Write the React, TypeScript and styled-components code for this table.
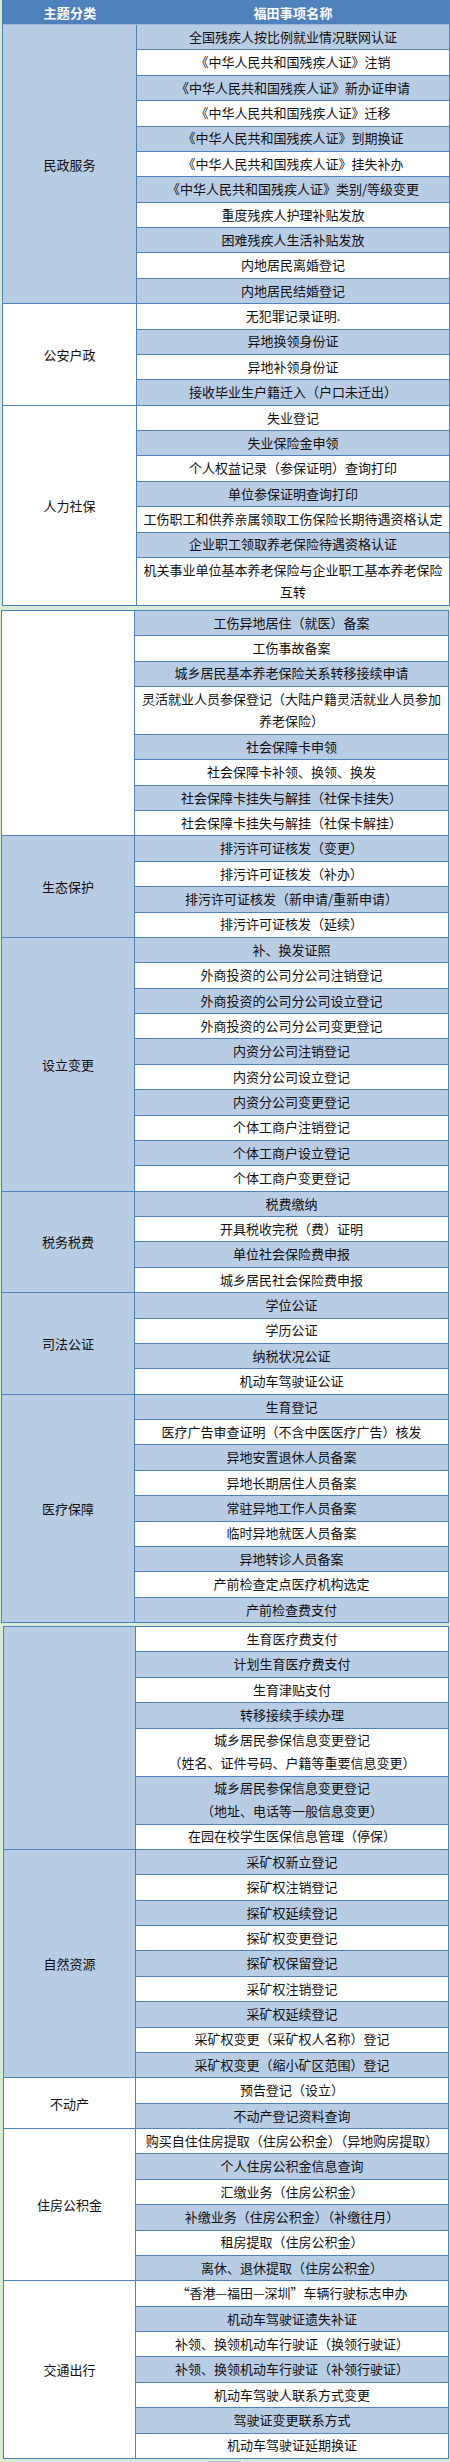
import styled, { createGlobalStyle } from "styled-components";

const GlobalStyle = createGlobalStyle`
    html, body {
        margin: 0;
        padding: 0;
        background: #d7ebd3;
    }
    body {
        font-family: "Noto Sans CJK SC", "Noto Sans", sans-serif;
        font-size: 13px;
        color: #111;
    }
`;

const LINE = "#4f81bd";
const STRIPE = "#b8cce4";

const Page = styled.div`
    width: 450px;
    min-height: 2462px;
    background: #d7ebd3;
    display: flex;
    flex-direction: column;
`;

const Block = styled.div<{ $left: number; $width: number; $top: number }>`
    margin-left: ${(p) => p.$left}px;
    margin-top: ${(p) => p.$top}px;
    width: ${(p) => p.$width}px;
    border: 1px solid ${LINE};
    background: #fff;
    display: flex;
    flex-direction: column;
`;

const HeaderRow = styled.div`
    display: flex;
    height: 23px;
    background: #4f81bd;
    border-bottom: 1px solid #9db5d8;
`;

const HeaderCell = styled.div<{ $w?: number }>`
    ${(p) => (p.$w ? `width: ${p.$w}px;` : "flex: 1;")}
    display: flex;
    align-items: center;
    justify-content: center;
    color: #fff;
    font-weight: 700;
    font-size: 13px;
    letter-spacing: 0.2px;
`;

const Section = styled.div`
    display: flex;
    &:not(:last-child) {
        border-bottom: 1px solid ${LINE};
    }
`;

const Category = styled.div<{ $w: number; $blue: boolean }>`
    width: ${(p) => p.$w}px;
    flex-shrink: 0;
    display: flex;
    align-items: center;
    justify-content: center;
    background: ${(p) => (p.$blue ? STRIPE : "#fff")};
    border-right: 1px solid ${LINE};
`;

const Items = styled.div`
    flex: 1;
    display: flex;
    flex-direction: column;
`;

const Item = styled.div<{ $blue: boolean }>`
    text-align: center;
    line-height: 22.6px;
    padding: 0.9px 2px;
    background: ${(p) => (p.$blue ? STRIPE : "#fff")};
    &:not(:last-child) {
        border-bottom: 1px solid ${LINE};
    }
`;

const Foot = styled.div`
    height: 3px;
    display: flex;
    justify-content: center;
`;

const FootMark = styled.div`
    width: 33px;
    height: 1px;
    margin-top: 2px;
    margin-left: -2px;
    background: #b9c2b8;
`;

type Sec = { name: string; blue: boolean; items: string[] };
type Blk = { left: number; width: number; top: number; cat: number; firstBlue: boolean; header?: boolean; sections: Sec[] };

const blocks: Blk[] = [
    {
        left: 2, width: 446, top: 0, cat: 133, firstBlue: true, header: true,
        sections: [
            {
                name: "民政服务", blue: true, items: [
                    "全国残疾人按比例就业情况联网认证",
                    "《中华人民共和国残疾人证》注销",
                    "《中华人民共和国残疾人证》新办证申请",
                    "《中华人民共和国残疾人证》迁移",
                    "《中华人民共和国残疾人证》到期换证",
                    "《中华人民共和国残疾人证》挂失补办",
                    "《中华人民共和国残疾人证》类别/等级变更",
                    "重度残疾人护理补贴发放",
                    "困难残疾人生活补贴发放",
                    "内地居民离婚登记",
                    "内地居民结婚登记",
                ],
            },
            {
                name: "公安户政", blue: false, items: [
                    "无犯罪记录证明.",
                    "异地换领身份证",
                    "异地补领身份证",
                    "接收毕业生户籍迁入（户口未迁出）",
                ],
            },
            {
                name: "人力社保", blue: false, items: [
                    "失业登记",
                    "失业保险金申领",
                    "个人权益记录（参保证明）查询打印",
                    "单位参保证明查询打印",
                    "工伤职工和供养亲属领取工伤保险长期待遇资格认定",
                    "企业职工领取养老保险待遇资格认证",
                    "机关事业单位基本养老保险与企业职工基本养老保险互转",
                ],
            },
        ],
    },
    {
        left: 1, width: 446, top: 4, cat: 132, firstBlue: true,
        sections: [
            {
                name: "", blue: false, items: [
                    "工伤异地居住（就医）备案",
                    "工伤事故备案",
                    "城乡居民基本养老保险关系转移接续申请",
                    "灵活就业人员参保登记（大陆户籍灵活就业人员参加养老保险）",
                    "社会保障卡申领",
                    "社会保障卡补领、换领、换发",
                    "社会保障卡挂失与解挂（社保卡挂失）",
                    "社会保障卡挂失与解挂（社保卡解挂）",
                ],
            },
            {
                name: "生态保护", blue: true, items: [
                    "排污许可证核发（变更）",
                    "排污许可证核发（补办）",
                    "排污许可证核发（新申请/重新申请）",
                    "排污许可证核发（延续）",
                ],
            },
            {
                name: "设立变更", blue: true, items: [
                    "补、换发证照",
                    "外商投资的公司分公司注销登记",
                    "外商投资的公司分公司设立登记",
                    "外商投资的公司分公司变更登记",
                    "内资分公司注销登记",
                    "内资分公司设立登记",
                    "内资分公司变更登记",
                    "个体工商户注销登记",
                    "个体工商户设立登记",
                    "个体工商户变更登记",
                ],
            },
            {
                name: "税务税费", blue: true, items: [
                    "税费缴纳",
                    "开具税收完税（费）证明",
                    "单位社会保险费申报",
                    "城乡居民社会保险费申报",
                ],
            },
            {
                name: "司法公证", blue: true, items: [
                    "学位公证",
                    "学历公证",
                    "纳税状况公证",
                    "机动车驾驶证公证",
                ],
            },
            {
                name: "医疗保障", blue: true, items: [
                    "生育登记",
                    "医疗广告审查证明（不含中医医疗广告）核发",
                    "异地安置退休人员备案",
                    "异地长期居住人员备案",
                    "常驻异地工作人员备案",
                    "临时异地就医人员备案",
                    "异地转诊人员备案",
                    "产前检查定点医疗机构选定",
                    "产前检查费支付",
                ],
            },
        ],
    },
    {
        left: 3, width: 444, top: 3, cat: 131, firstBlue: false,
        sections: [
            {
                name: "", blue: true, items: [
                    "生育医疗费支付",
                    "计划生育医疗费支付",
                    "生育津贴支付",
                    "转移接续手续办理",
                    "城乡居民参保信息变更登记\n（姓名、证件号码、户籍等重要信息变更）",
                    "城乡居民参保信息变更登记\n（地址、电话等一般信息变更）",
                    "在园在校学生医保信息管理（停保）",
                ],
            },
            {
                name: "自然资源", blue: true, items: [
                    "采矿权新立登记",
                    "探矿权注销登记",
                    "探矿权延续登记",
                    "探矿权变更登记",
                    "探矿权保留登记",
                    "采矿权注销登记",
                    "采矿权延续登记",
                    "采矿权变更（采矿权人名称）登记",
                    "采矿权变更（缩小矿区范围）登记",
                ],
            },
            {
                name: "不动产", blue: false, items: [
                    "预告登记（设立）",
                    "不动产登记资料查询",
                ],
            },
            {
                name: "住房公积金", blue: false, items: [
                    "购买自住住房提取（住房公积金）（异地购房提取）",
                    "个人住房公积金信息查询",
                    "汇缴业务（住房公积金）",
                    "补缴业务（住房公积金）（补缴往月）",
                    "租房提取（住房公积金）",
                    "离休、退休提取（住房公积金）",
                ],
            },
            {
                name: "交通出行", blue: false, items: [
                    "“香港—福田—深圳”车辆行驶标志申办",
                    "机动车驾驶证遗失补证",
                    "补领、换领机动车行驶证（换领行驶证）",
                    "补领、换领机动车行驶证（补领行驶证）",
                    "机动车驾驶人联系方式变更",
                    "驾驶证变更联系方式",
                    "机动车驾驶证延期换证",
                ],
            },
        ],
    },
];

const renderText = (text: string) =>
    text.split("\n").map((line, i) => (
        <span key={i}>
            {i > 0 && <br />}
            {line}
        </span>
    ));

const ServiceBlock = ({ block }: { block: Blk }) => {
    let row = 0;
    return (
        <Block $left={block.left} $width={block.width} $top={block.top}>
            {block.header && (
                <HeaderRow>
                    <HeaderCell $w={block.cat + 1}>主题分类</HeaderCell>
                    <HeaderCell>福田事项名称</HeaderCell>
                </HeaderRow>
            )}
            {block.sections.map((sec, si) => (
                <Section key={si}>
                    <Category $w={block.cat} $blue={sec.blue}>{sec.name}</Category>
                    <Items>
                        {sec.items.map((item, ii) => {
                            const blue = (row++ % 2 === 0) === block.firstBlue;
                            return (
                                <Item key={ii} $blue={blue}>
                                    {renderText(item)}
                                </Item>
                            );
                        })}
                    </Items>
                </Section>
            ))}
        </Block>
    );
};

const App = () => {
    return (
        <Page>
            <GlobalStyle />
            {blocks.map((b, i) => (
                <ServiceBlock key={i} block={b} />
            ))}
            <Foot>
                <FootMark />
            </Foot>
        </Page>
    );
};

export default App;
